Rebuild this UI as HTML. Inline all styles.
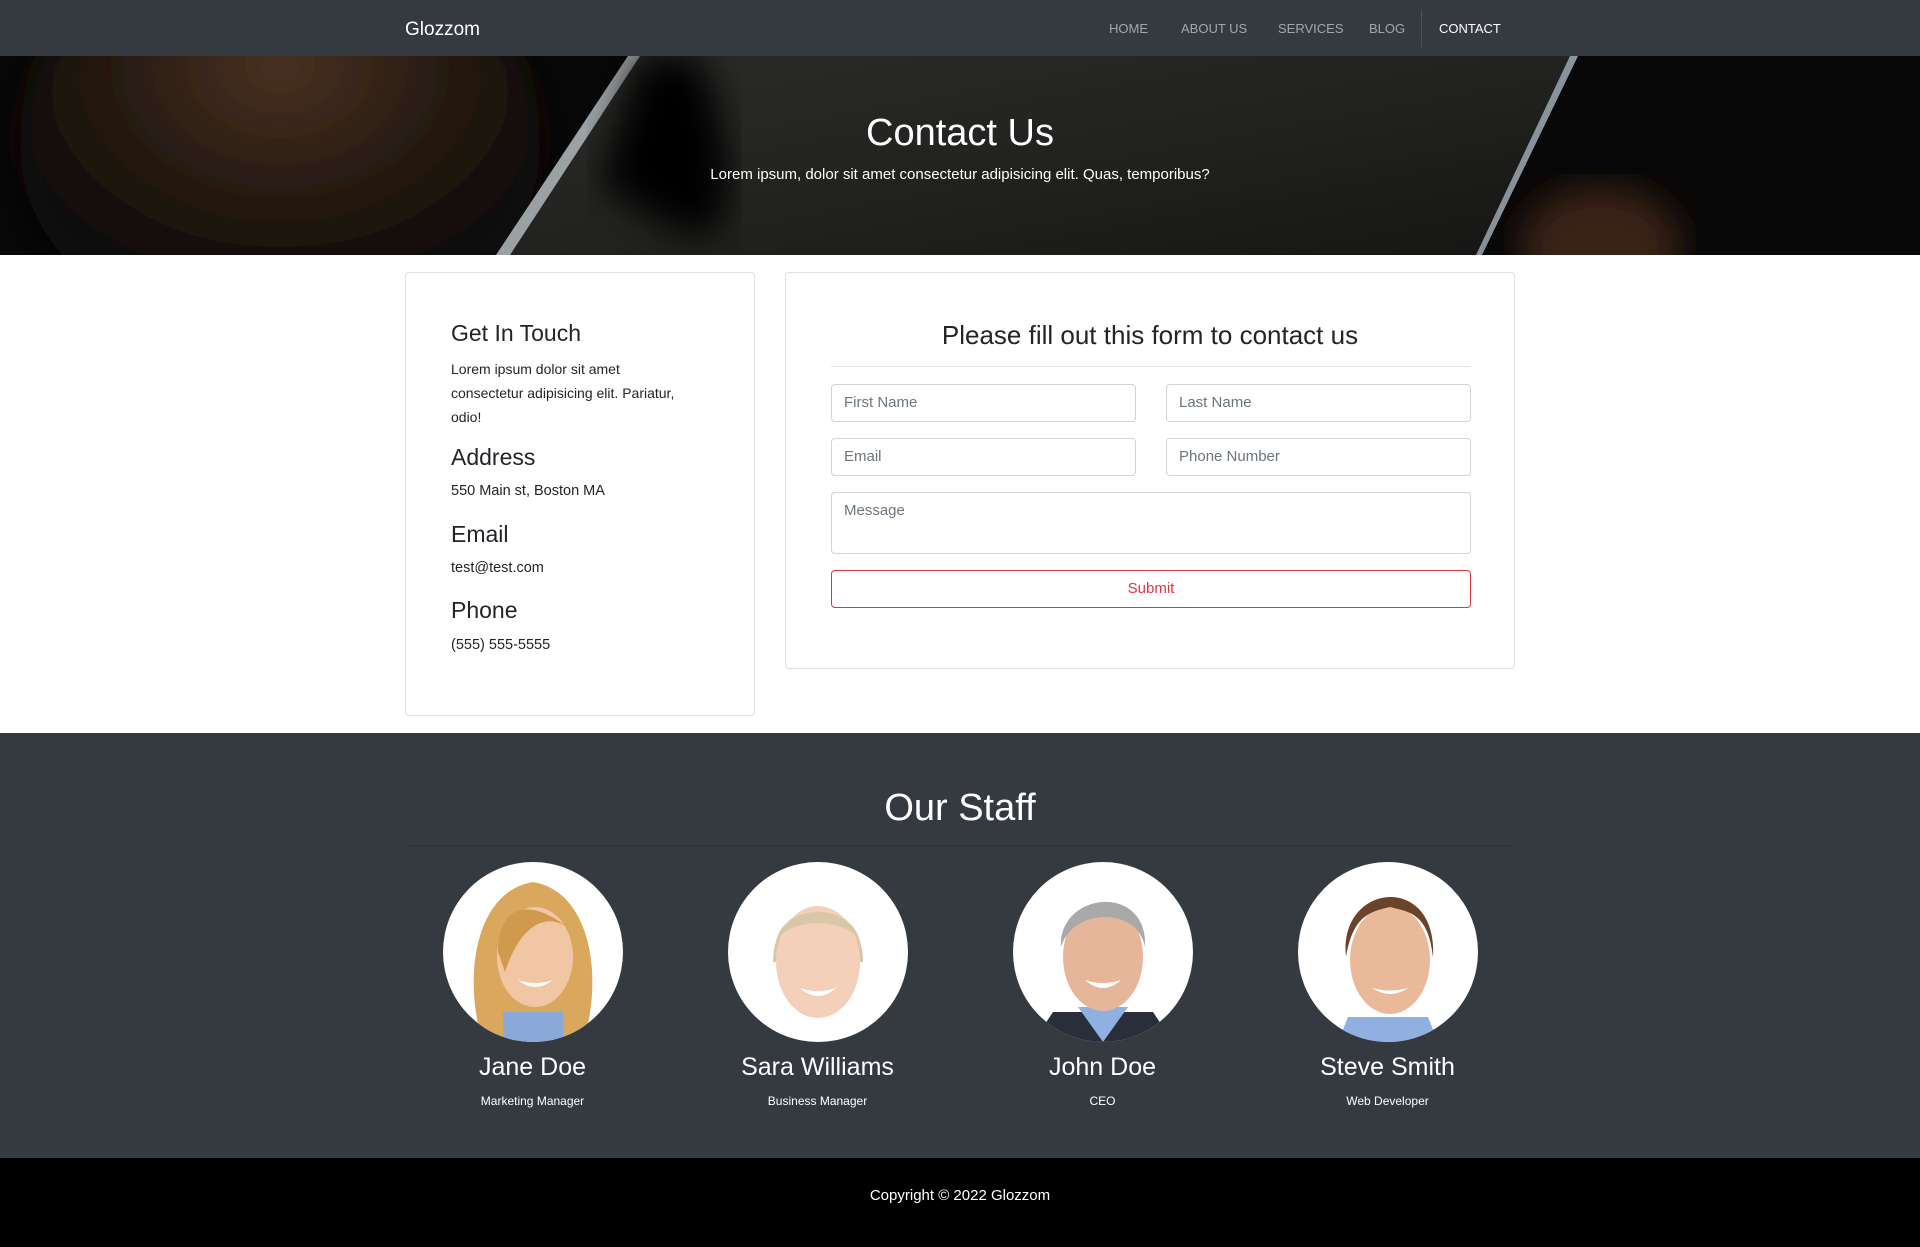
<!DOCTYPE html>
<html><head><meta charset="utf-8"><style>
*{box-sizing:border-box;margin:0;padding:0}
body{width:1920px;height:1247px;font-family:"Liberation Sans",sans-serif;color:#212529;background:#fff;position:relative;overflow:hidden}
.abs{position:absolute}
nav{position:absolute;left:0;top:0;width:1920px;height:56px;background:#343a40}
.brand{left:405px;top:19px;font-size:19px;color:#fff}
.nl{top:21px;font-size:13px;color:rgba(255,255,255,.55)}
.hero{left:0;top:56px;width:1920px;height:199px}
.card{border:1px solid #dfdfdf;border-radius:4px;background:#fff}
.inp{border:1px solid #ced4da;border-radius:4px;height:38px;font-size:15px;color:#6c757d;padding:9px 12px}
.staff{left:0;top:733px;width:1920px;height:425px;background:#343a40;color:#fff}
.name{width:285px;text-align:center;font-size:25px;top:320px}
.role{width:285px;text-align:center;font-size:12px;top:361px}
</style></head><body>
<nav>
<div class="abs brand">Glozzom</div>
<div class="abs nl" style="left:1109px">HOME</div>
<div class="abs nl" style="left:1181px">ABOUT US</div>
<div class="abs nl" style="left:1278px">SERVICES</div>
<div class="abs nl" style="left:1369px">BLOG</div>
<div class="abs" style="left:1421px;top:10px;width:1px;height:37px;background:rgba(255,255,255,.12)"></div>
<div class="abs nl" style="left:1439px;color:#fff">CONTACT</div>
</nav>
<svg class="abs hero" viewBox="0 0 1920 199" width="1920" height="199">
<defs>
<radialGradient id="br" cx="0.5" cy="0.3" r="0.6"><stop offset="0" stop-color="#4a3222"/><stop offset="0.6" stop-color="#22170f"/><stop offset="1" stop-color="#0c0908"/></radialGradient>
<linearGradient id="tb" x1="0" y1="0" x2="1" y2="1"><stop offset="0" stop-color="#2b2b29"/><stop offset="0.5" stop-color="#222220"/><stop offset="1" stop-color="#151514"/></linearGradient>
<filter id="bl"><feGaussianBlur stdDeviation="18"/></filter>
</defs>
<rect width="1920" height="199" fill="#080707"/>
<ellipse cx="280" cy="90" rx="260" ry="200" fill="url(#br)" filter="url(#bl)"/>
<ellipse cx="1600" cy="190" rx="80" ry="60" fill="#3a2418" filter="url(#bl)"/>
<polygon points="628,0 1578,0 1482,199 496,199" fill="url(#tb)"/>
<polygon points="628,0 640,0 510,199 496,199" fill="#cfd6dc" opacity=".7"/>
<polygon points="1570,0 1578,0 1482,199 1476,199" fill="#b8c4d0" opacity=".7"/>
<path d="M640 0 L700 0 C720 60 740 120 720 170 C700 200 640 150 600 130 Z" fill="#050505" filter="url(#bl)"/>
</svg>
<div class="abs" style="left:0;top:112px;width:1920px;text-align:center;color:#fff;font-size:38px;font-weight:500">Contact Us</div>
<div class="abs" style="left:0;top:166px;width:1920px;text-align:center;color:#fff;font-size:15px">Lorem ipsum, dolor sit amet consectetur adipisicing elit. Quas, temporibus?</div>

<div class="abs card" style="left:405px;top:272px;width:350px;height:444px">
<div class="abs" style="left:45px;top:47px;font-size:23px">Get In Touch</div>
<div class="abs" style="left:45px;top:84px;width:235px;font-size:14px;line-height:24px">Lorem ipsum dolor sit amet consectetur adipisicing elit. Pariatur, odio!</div>
<div class="abs" style="left:45px;top:171px;font-size:23px">Address</div>
<div class="abs" style="left:45px;top:210px;font-size:14.5px">550 Main st, Boston MA</div>
<div class="abs" style="left:45px;top:248px;font-size:23px">Email</div>
<div class="abs" style="left:45px;top:287px;font-size:14.5px">test@test.com</div>
<div class="abs" style="left:45px;top:324px;font-size:23px">Phone</div>
<div class="abs" style="left:45px;top:364px;font-size:14.5px">(555) 555-5555</div>
</div>

<div class="abs card" style="left:785px;top:272px;width:730px;height:397px">
<div class="abs" style="left:0;top:47px;width:728px;text-align:center;font-size:26px">Please fill out this form to contact us</div>
<div class="abs" style="left:45px;top:93px;width:640px;height:1px;background:#e3e3e3"></div>
<div class="abs inp" style="left:45px;top:111px;width:305px">First Name</div>
<div class="abs inp" style="left:380px;top:111px;width:305px">Last Name</div>
<div class="abs inp" style="left:45px;top:165px;width:305px">Email</div>
<div class="abs inp" style="left:380px;top:165px;width:305px">Phone Number</div>
<div class="abs inp" style="left:45px;top:219px;width:640px;height:62px">Message</div>
<div class="abs" style="left:45px;top:297px;width:640px;height:38px;border:1px solid #dc3545;border-radius:4px;color:#dc3545;font-size:15px;text-align:center;line-height:36px">Submit</div>
</div>

<div class="abs staff">
<div class="abs" style="left:0;top:54px;width:1920px;text-align:center;font-size:38px;font-weight:500">Our Staff</div>
<div class="abs" style="left:405px;top:112px;width:1110px;height:1px;background:rgba(0,0,0,.15)"></div>

<div class="abs" style="left:390px;top:0">
<svg class="abs" style="left:53px;top:129px" width="180" height="180" viewBox="0 0 180 180"><clipPath id="c1"><circle cx="90" cy="90" r="90"/></clipPath><g clip-path="url(#c1)"><rect width="180" height="180" fill="#fff"/><path d="M40 180 C20 120 30 30 90 20 C150 30 160 120 140 180Z" fill="#d9a85c"/><rect x="60" y="150" width="60" height="40" fill="#8aa9d8"/><ellipse cx="92" cy="95" rx="38" ry="50" fill="#f1c6a4"/><path d="M55 90 C55 40 90 35 130 70 C110 50 80 55 62 110Z" fill="#d09a4e"/><path d="M75 118 Q92 132 110 118 Q92 124 75 118Z" fill="#fff"/></g></svg>
<div class="abs name" style="left:0">Jane Doe</div><div class="abs role" style="left:0">Marketing Manager</div></div>

<div class="abs" style="left:675px;top:0">
<svg class="abs" style="left:53px;top:129px" width="180" height="180" viewBox="0 0 180 180"><clipPath id="c2"><circle cx="90" cy="90" r="90"/></clipPath><g clip-path="url(#c2)"><rect width="180" height="180" fill="#fff"/><path d="M45 100 C45 30 135 30 135 100Z" fill="#d8c6a6"/><ellipse cx="90" cy="100" rx="42" ry="56" fill="#f4d0bb"/><path d="M48 80 C55 40 125 40 132 80 C120 55 60 55 48 80Z" fill="#d9c8a8"/><path d="M72 126 Q90 142 108 126 Q90 132 72 126Z" fill="#fff"/></g></svg>
<div class="abs name" style="left:0">Sara Williams</div><div class="abs role" style="left:0">Business Manager</div></div>

<div class="abs" style="left:960px;top:0">
<svg class="abs" style="left:53px;top:129px" width="180" height="180" viewBox="0 0 180 180"><clipPath id="c3"><circle cx="90" cy="90" r="90"/></clipPath><g clip-path="url(#c3)"><rect width="180" height="180" fill="#fff"/><path d="M20 180 L40 150 L140 150 L160 180Z" fill="#2a2d3a"/><path d="M65 145 L90 180 L115 145Z" fill="#8fb0e0"/><ellipse cx="90" cy="95" rx="40" ry="54" fill="#e6b69a"/><path d="M48 85 C45 30 135 20 132 85 C125 45 60 45 48 85Z" fill="#a9a9a9"/><path d="M72 118 Q90 134 108 118 Q90 124 72 118Z" fill="#fff"/></g></svg>
<div class="abs name" style="left:0">John Doe</div><div class="abs role" style="left:0">CEO</div></div>

<div class="abs" style="left:1245px;top:0">
<svg class="abs" style="left:53px;top:129px" width="180" height="180" viewBox="0 0 180 180"><clipPath id="c4"><circle cx="90" cy="90" r="90"/></clipPath><g clip-path="url(#c4)"><rect width="180" height="180" fill="#fff"/><path d="M50 155 L130 155 L140 180 L40 180Z" fill="#8fb0e0"/><ellipse cx="92" cy="98" rx="40" ry="54" fill="#eab99a"/><path d="M48 95 C40 20 140 10 135 95 C130 50 110 50 92 45 C70 50 55 55 48 95Z" fill="#6b4328"/><path d="M74 126 Q92 138 110 126 Q92 131 74 126Z" fill="#fff"/></g></svg>
<div class="abs name" style="left:0">Steve Smith</div><div class="abs role" style="left:0">Web Developer</div></div>
</div>

<div class="abs" style="left:0;top:1158px;width:1920px;height:89px;background:#000;color:#fff;text-align:center;font-size:15px;line-height:76px">Copyright © 2022 Glozzom</div>
</body></html>
